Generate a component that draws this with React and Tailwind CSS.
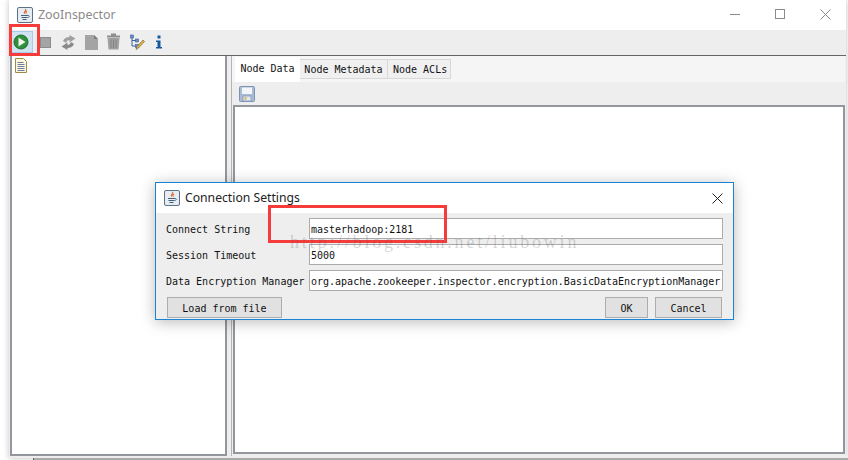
import React from "react";

const mono = "font-['DejaVu_Sans_Mono','Liberation_Mono',monospace]";

function JavaIcon() {
  return (
    <svg width="16" height="16" viewBox="0 0 16 16">
      <rect x="0.5" y="0.5" width="15" height="15" rx="1.5" fill="#e6ecf2" stroke="#5d7288" />
      <path d="M8.5 2c1.5 1.6-2.5 2.6-1 4.600M10 4c-1 .8-1.600 1.400-.6 2.600" fill="none" stroke="#d9622b" strokeWidth="1.100" />
      <path d="M4 8.500h7M4.500 10.500h6M5.500 12.500h4" stroke="#44607c" strokeWidth="1" />
      <path d="M11 8.500c2 0 2 1.800-.5 2" fill="none" stroke="#44607c" strokeWidth="0.800" />
    </svg>
  );
}

function ToolIcons() {
  return (
    <>
      <div className="absolute left-[11px] top-[31px] h-[22px] w-[22px] border border-[#a9cde8] bg-[#cfe3f3]" />
      <svg width="16" height="16" viewBox="0 0 16 16" className="absolute left-[13px] top-[34px]">
        <circle cx="8" cy="8" r="7" fill="#2f8f3a" stroke="#1f6e2a" />
        <path d="M5.500 3.500v9l7-4.500z" fill="#f2f7ee" />
      </svg>
      <div className="absolute left-[40px] top-[37px] h-[11px] w-[11px] border border-[#8c8c8c] bg-[#a4a4a4]" />
      <svg width="17" height="17" viewBox="0 0 17 17" className="absolute left-[60px] top-[34px]">
        <path d="M9.500 1l6 3.500-6 4V6C7.500 6 6.500 7.500 6 9L3 7C4 4.500 6.500 3 9.500 3z" fill="#a0a0a0" />
        <path d="M7.500 16l-6-3.500 6-4V11c2 0 3-1.500 3.500-3l3 2c-1 2.500-3.500 4-6.500 4z" fill="#8a8a8a" />
      </svg>
      <svg width="14" height="17" viewBox="0 0 14 17" className="absolute left-[85px] top-[34px]">
        <path d="M0 1h9l4 4v11H0z" fill="#a4a4a4" />
        <path d="M9 1l4 4H9z" fill="#7c7c7c" />
      </svg>
      <svg width="15" height="17" viewBox="0 0 15 17" className="absolute left-[106px] top-[33px]">
        <path d="M5 1.500h5M1 3.500h13" stroke="#8e8e8e" strokeWidth="1.800" />
        <path d="M1.500 5h12l-1 11.500h-10z" fill="#a0a0a0" />
        <path d="M5 6.500v8.500M7.500 6.500v8.500M10 6.500v8.500" stroke="#828282" />
      </svg>
      <svg width="16" height="17" viewBox="0 0 16 17" className="absolute left-[129px] top-[34px]">
        <path d="M3 3v9h4M3 6.500h4" fill="none" stroke="#3e5f99" />
        <rect x="1.500" y="1" width="3" height="3" fill="#6d8fc4" stroke="#3e5f99" strokeWidth="0.600" />
        <rect x="6.500" y="5" width="3" height="3" fill="#6d8fc4" stroke="#3e5f99" strokeWidth="0.600" />
        <rect x="6.500" y="10.500" width="3" height="3" fill="#6d8fc4" stroke="#3e5f99" strokeWidth="0.600" />
        <path d="M7 15.500l1-3 6-6.500 1.500 1.500-6 6.500z" fill="#e0b252" stroke="#6e5a2a" strokeWidth="0.600" />
      </svg>
      <svg width="8" height="14" viewBox="0 0 8 14" className="absolute left-[155px] top-[35px]">
        <rect x="2.500" y="0.500" width="3" height="3" fill="#16579e" />
        <path d="M1 5.500h4.500v6.500H7v1.500H1V12h1.500V7H1z" fill="#16579e" />
      </svg>
    </>
  );
}

function Field({ label, value }) {
  return (
    <div className="flex h-[21px] items-center">
      <span className="w-[143px] shrink-0 pt-[1px] text-[10px] text-[#111]">{label}</span>
      <div className="flex h-[21px] w-[414px] items-center border border-[#ababab] bg-white pl-[1px] pt-[1px] text-[10px] text-[#111]">
        {value}
      </div>
    </div>
  );
}

function Button({ children, className }) {
  return (
    <div className={"flex h-[21px] items-center justify-center border border-[#adadad] bg-[#e1e1e1] pt-[1px] text-[10px] text-[#111] " + className}>
      {children}
    </div>
  );
}

function Dialog() {
  return (
    <div className={"absolute left-[155px] top-[182px] flex h-[138px] w-[579px] flex-col border border-[#1883d7] bg-[#eeeeee] shadow-[0_2px_14px_rgba(0,0,0,0.28)] " + mono}>
      <div className="flex h-[30px] shrink-0 items-center bg-white pl-[8px] pr-[10px]">
        <JavaIcon />
        <span className="ml-[5px] font-['Noto_Sans',sans-serif] text-[12.2px] text-[#222]">Connection Settings</span>
        <svg width="11" height="11" viewBox="0 0 11 11" className="ml-auto">
          <path d="M.5.500l10 10M10.500.500l-10 10" stroke="#222" />
        </svg>
      </div>
      <div className="flex flex-col gap-[5px] pl-[10px] pt-[5px]">
        <Field label="Connect String" value="masterhadoop:2181" />
        <Field label="Session Timeout" value="5000" />
        <Field label="Data Encryption Manager" value="org.apache.zookeeper.inspector.encryption.BasicDataEncryptionManager" />
      </div>
      <div className="mt-[6px] flex pl-[11px] pr-[11px]">
        <Button className="w-[115px]">Load from file</Button>
        <Button className="ml-auto w-[43px]">OK</Button>
        <Button className="ml-[7px] w-[67px]">Cancel</Button>
      </div>
    </div>
  );
}

export default function App() {
  return (
    <div className="relative h-[460px] w-[848px] overflow-hidden bg-white">
      <div className="ml-[9px] flex h-[458px] w-[837px] flex-col bg-[#eeeeee] shadow-[0_0_6px_rgba(0,0,0,0.25)]">
        {/* title bar */}
        <div className="flex h-[30px] shrink-0 items-center bg-white pl-[8px]">
          <JavaIcon />
          <span className="ml-[5px] font-['Noto_Sans',sans-serif] text-[12.4px] text-[#8a8a8a]">ZooInspector</span>
          <div className="mb-[2px] ml-auto flex items-center gap-[35px] pr-[15px]">
            <div className="h-px w-[10px] bg-[#8a8a8a]" />
            <div className="h-[10px] w-[10px] border border-[#8a8a8a]" />
            <svg width="11" height="11" viewBox="0 0 11 11">
              <path d="M.5.500l10 10M10.500.500l-10 10" stroke="#8a8a8a" />
            </svg>
          </div>
        </div>

        {/* toolbar */}
        <div className="h-[26px] shrink-0 border-b border-[#666]" />

        {/* split pane */}
        <div className="flex min-h-0 flex-1">
          <div className="ml-px h-[400px] w-[217px] shrink-0 border-2 border-t-0 border-[#94969d] bg-white pl-[2px] pt-[2px]">
            <svg width="14" height="15" viewBox="0 0 14 15">
              <path d="M1.500.500h8l3 3v11h-11z" fill="#fdf8d8" stroke="#9c8a4c" />
              <path d="M3.500 4.500h6M3.500 6.500h7M3.500 8.500h7M3.500 10.500h7M3.500 12.500h7" stroke="#6f7ea8" />
            </svg>
          </div>
          <div className="ml-[4px] flex h-[400px] w-[614px] flex-col border-l border-[#b4b4b4] pb-[2px]">
            <div className={"flex h-[26px] shrink-0 items-end bg-[#f5f5f5] pl-[3px] text-[10px] text-[#111] " + mono}>
              <div className="flex h-[25px] w-[65px] items-center justify-center bg-white pb-[3px]">Node Data</div>
              <div className="mb-[3px] flex h-[20px] w-[88px] items-center justify-center border border-l-0 border-[#d8d8d8] bg-[#f0f0f0] pt-[1px]">Node Metadata</div>
              <div className="mb-[3px] flex h-[20px] w-[63px] items-center border border-l-0 border-[#d8d8d8] bg-[#f0f0f0] pl-[5px] pt-[1px]">Node ACLs</div>
            </div>
            <div className="h-[23px] shrink-0 pl-[7px] pt-[4px]">
              <svg width="16" height="16" viewBox="0 0 16 16">
                <rect x="0.500" y="0.500" width="15" height="15" rx="1" fill="#a9bcd6" stroke="#7d93b3" />
                <rect x="3" y="1.500" width="10" height="6.500" fill="#f3f5f8" />
                <rect x="4" y="10" width="8" height="5" fill="#e3e7ee" stroke="#7d93b3" strokeWidth="0.700" />
                <rect x="5.500" y="11" width="2" height="3" fill="#d9b968" />
              </svg>
            </div>
            <div className="ml-px min-h-0 flex-1 border-2 border-[#94969d] bg-white" />
          </div>
        </div>
      </div>

      {/* taskbar edge at the bottom of the capture */}
      <div className="ml-[33px] h-[2px] border-l border-[#666] bg-[#aaaaaa]" />

      <ToolIcons />

      <Dialog />

      {/* red annotations drawn over the capture */}
      <div className="absolute left-[9px] top-[24px] h-[32px] w-[31px] border-[3px] border-[#f63b3b]" />
      <div className="absolute left-[268px] top-[205px] h-[38px] w-[179px] border-[3px] border-[#f63b3b]" />
      <div className="absolute left-[290px] top-[229px] font-['Liberation_Serif',serif] text-[18px] tracking-[2.800px] text-[rgba(90,90,90,0.25)]">
        http://blog.csdn.net/liubowin
      </div>
    </div>
  );
}
